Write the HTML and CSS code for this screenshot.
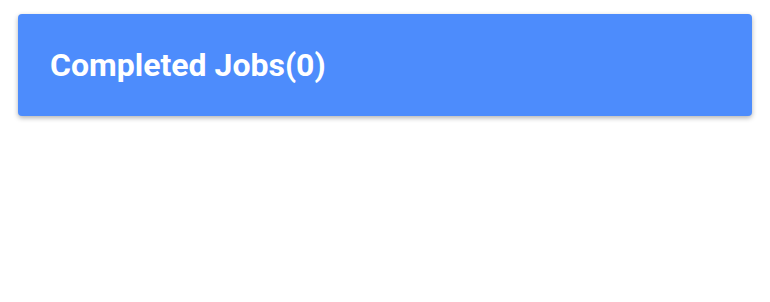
FILE: index.html
```html
<!DOCTYPE html>
<html lang="en">

<head>
    <meta charset="UTF-8">
    <meta name="viewport" content="width=device-width, initial-scale=1.0">
    <title>Jobs</title>
    <link rel="stylesheet" href="styles.css">
</head>

<body>
    <div class="panel">
        <div class="panel-head">
            <h2 class="title">Completed Jobs(0)</h2>
        </div>
    </div>
</body>

</html>
```

FILE: styles.css
```css
* {
    padding: 0;
    margin: 0;
    box-sizing: border-box;
}

body {
    font-family: Roboto, "Noto Sans", sans-serif;
    background: #fff;
    padding: 14px 18px;
}

.panel {
    width: 734px;
}

.panel-head {
    background: #4d8cfc;
    border-radius: 4px;
    height: 102px;
    display: flex;
    align-items: center;
    padding: 0 32px;
    box-shadow: 0 2px 5px rgba(0, 0, 0, 0.3);
}

.title {
    color: #fff;
    font-size: 32px;
    font-weight: bold;
}
```
